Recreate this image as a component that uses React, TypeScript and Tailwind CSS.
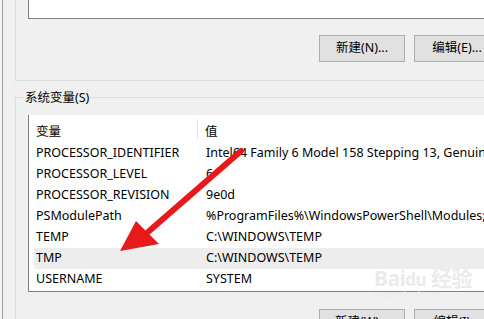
const rows: [string, string][] = [
  ["PROCESSOR_IDENTIFIER", "Intel64 Family 6 Model 158 Stepping 13, GenuineIntel"],
  ["PROCESSOR_LEVEL", "6"],
  ["PROCESSOR_REVISION", "9e0d"],
  ["PSModulePath", "%ProgramFiles%\\WindowsPowerShell\\Modules;C:\\WINDOWS"],
  ["TEMP", "C:\\WINDOWS\\TEMP"],
  ["TMP", "C:\\WINDOWS\\TEMP"],
  ["USERNAME", "SYSTEM"],
];

const font = { fontFamily: '"Segoe UI", "Noto Sans", "Noto Sans CJK SC", sans-serif' };

function Btn({ label }: { label: string }) {
  return (
    <div className="w-[86px] h-[27px] shrink-0 bg-[#e1e1e1] border border-[#adadad] flex items-center justify-center text-[12.5px] text-black">
      {label}
    </div>
  );
}

export default function App() {
  return (
    <div
      className="relative w-[484px] h-[319px] overflow-hidden bg-[#f0f0f0] flex text-black"
      style={font}
    >
      <div className="w-[3px] shrink-0 border-r border-[#a0a0a0] bg-[#f4f4f4]" />
      <div className="flex-1 flex flex-col pl-[12px]">
        {/* user variables group (bottom part) */}
        <div className="h-[81px] shrink-0 border-l border-b border-[#dcdcdc] pl-[12px] flex flex-col">
          <div className="h-[19px] shrink-0 bg-white border-l border-b border-[#828282]" />
          <div className="flex gap-[9px] pl-[291px] mt-[16px]">
            <Btn label="新建(N)..." />
            <Btn label="编辑(E)..." />
          </div>
        </div>
        {/* system variables group */}
        <div className="relative mt-[16px] flex-1 border-l border-t border-[#dcdcdc] pl-[12px] pt-[17px]">
          <div className="absolute left-[8px] top-[-9px] px-[1px] bg-[#f0f0f0] text-[12.5px] leading-[18px]">
            系统变量(S)
          </div>
          <div className="h-[177px] bg-white border-l border-b border-[#828282] flex flex-col text-[12.5px]">
            <div className="h-[27px] shrink-0 flex items-center pt-[7px]">
              <div className="w-[169px] h-full pl-[7px] flex items-center border-r border-[#e5e5e5] mt-[-7px] pt-[7px]">变量</div>
              <div className="pl-[7px]">值</div>
            </div>
            <div className="flex flex-col pt-[1px]">
              {rows.map(([k, v]) => (
                <div
                  key={k}
                  className={`h-[21px] ml-[5px] flex items-center whitespace-nowrap ${k === "TMP" ? "bg-[#ededed]" : ""}`}
                >
                  <div className="w-[170px] pl-[2px] shrink-0">{k}</div>
                  <div className="pl-[2px]">{v}</div>
                </div>
              ))}
            </div>
          </div>
          <div className="flex gap-[9px] pl-[291px] mt-[17px]">
            <Btn label="新建(W)..." />
            <Btn label="编辑(I)..." />
          </div>
        </div>
      </div>

      {/* baidu watermark */}
      <div className="absolute left-[374px] top-[268px] text-[21px] font-bold text-[#ebebeb] tracking-tight leading-none">
        Bai<span className="text-[17px]">du</span> 经验
      </div>
      <div className="absolute left-[374px] top-[290px] text-[8px] text-[#ececec] leading-none">
        jingyan.baidu.com
      </div>

      {/* red arrow */}
      <svg className="absolute left-0 top-0" width="484" height="319" viewBox="0 0 484 319">
        <line x1="241" y1="151" x2="148" y2="232" stroke="#e8191b" strokeWidth="6" strokeLinecap="round" />
        <polygon points="120,251 136,221 159,244" fill="#e8191b" />
      </svg>
    </div>
  );
}
